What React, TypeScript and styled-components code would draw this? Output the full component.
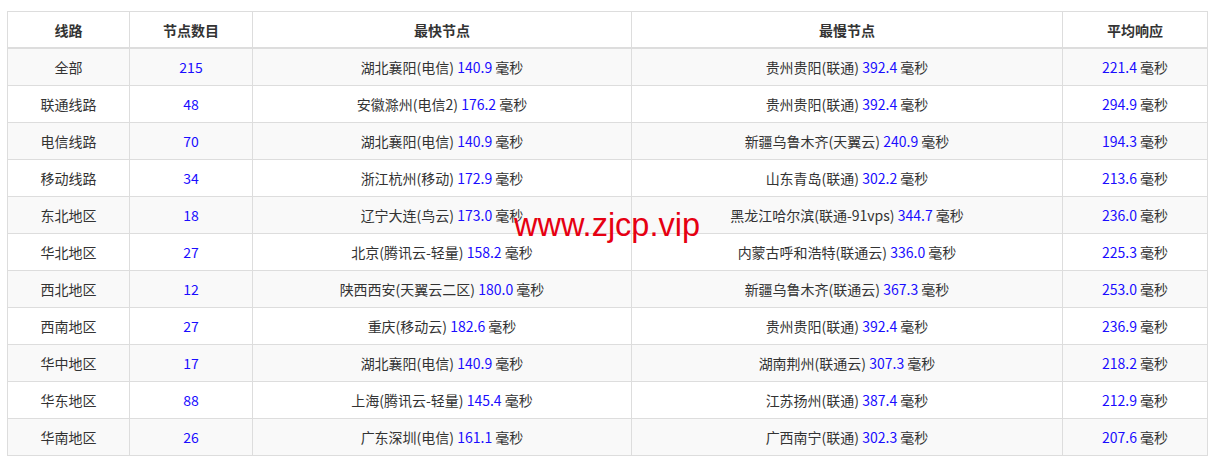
import React from 'react';
import styled, { createGlobalStyle } from 'styled-components';

const GlobalStyle = createGlobalStyle`
  body {
    margin: 0;
    background: #ffffff;
    font-family: "Noto Sans CJK SC", "Noto Sans", sans-serif;
  }
`;

const Page = styled.div`
  position: relative;
  padding: 11px 10px 0 7px;
  width: 1216px;
  height: 467px;
  box-sizing: border-box;
`;

const Table = styled.table`
  width: 1200px;
  border-collapse: collapse;
  table-layout: fixed;
  font-size: 14px;
  color: #333333;
  border: 1px solid #dddddd;
`;

const HeadCell = styled.th`
  height: 35px;
  padding: 0;
  font-weight: bold;
  font-size: 14px;
  text-align: center;
  border: 1px solid #dddddd;
  border-bottom: 2px solid #dddddd;
  background: #ffffff;
`;

const Row = styled.tr<{ $striped: boolean }>`
  background: ${(p) => (p.$striped ? '#f9f9f9' : '#ffffff')};
`;

const Cell = styled.td`
  height: 36px;
  padding: 0;
  text-align: center;
  border: 1px solid #dddddd;
  white-space: nowrap;
`;

const Num = styled.span`
  color: #1a0dff;
`;

const Watermark = styled.div`
  position: absolute;
  left: 514px;
  top: 207px;
  font-family: "Liberation Sans", Arial, sans-serif;
  font-size: 32.5px;
  color: #e60012;
  pointer-events: none;
`;

type Line = {
  name: string;
  count: number;
  fast: [string, string];
  slow: [string, string];
  avg: string;
};

const rows: Line[] = [
  { name: '全部', count: 215, fast: ['湖北襄阳(电信)', '140.9'], slow: ['贵州贵阳(联通)', '392.4'], avg: '221.4' },
  { name: '联通线路', count: 48, fast: ['安徽滁州(电信2)', '176.2'], slow: ['贵州贵阳(联通)', '392.4'], avg: '294.9' },
  { name: '电信线路', count: 70, fast: ['湖北襄阳(电信)', '140.9'], slow: ['新疆乌鲁木齐(天翼云)', '240.9'], avg: '194.3' },
  { name: '移动线路', count: 34, fast: ['浙江杭州(移动)', '172.9'], slow: ['山东青岛(联通)', '302.2'], avg: '213.6' },
  { name: '东北地区', count: 18, fast: ['辽宁大连(鸟云)', '173.0'], slow: ['黑龙江哈尔滨(联通-91vps)', '344.7'], avg: '236.0' },
  { name: '华北地区', count: 27, fast: ['北京(腾讯云-轻量)', '158.2'], slow: ['内蒙古呼和浩特(联通云)', '336.0'], avg: '225.3' },
  { name: '西北地区', count: 12, fast: ['陕西西安(天翼云二区)', '180.0'], slow: ['新疆乌鲁木齐(联通云)', '367.3'], avg: '253.0' },
  { name: '西南地区', count: 27, fast: ['重庆(移动云)', '182.6'], slow: ['贵州贵阳(联通)', '392.4'], avg: '236.9' },
  { name: '华中地区', count: 17, fast: ['湖北襄阳(电信)', '140.9'], slow: ['湖南荆州(联通云)', '307.3'], avg: '218.2' },
  { name: '华东地区', count: 88, fast: ['上海(腾讯云-轻量)', '145.4'], slow: ['江苏扬州(联通)', '387.4'], avg: '212.9' },
  { name: '华南地区', count: 26, fast: ['广东深圳(电信)', '161.1'], slow: ['广西南宁(联通)', '302.3'], avg: '207.6' },
];

const Node: React.FC<{ place: string; ms: string }> = ({ place, ms }) => (
  <>
    {place} <Num>{ms}</Num> 毫秒
  </>
);

const App: React.FC = () => {
  return (
    <Page>
      <GlobalStyle />
      <Table>
        <colgroup>
          <col style={{ width: 122 }} />
          <col style={{ width: 123 }} />
          <col style={{ width: 379 }} />
          <col style={{ width: 431 }} />
          <col style={{ width: 145 }} />
        </colgroup>
        <thead>
          <tr>
            <HeadCell>线路</HeadCell>
            <HeadCell>节点数目</HeadCell>
            <HeadCell>最快节点</HeadCell>
            <HeadCell>最慢节点</HeadCell>
            <HeadCell>平均响应</HeadCell>
          </tr>
        </thead>
        <tbody>
          {rows.map((r, i) => (
            <Row key={r.name} $striped={i % 2 === 0}>
              <Cell>{r.name}</Cell>
              <Cell>
                <Num>{r.count}</Num>
              </Cell>
              <Cell>
                <Node place={r.fast[0]} ms={r.fast[1]} />
              </Cell>
              <Cell>
                <Node place={r.slow[0]} ms={r.slow[1]} />
              </Cell>
              <Cell>
                <Num>{r.avg}</Num> 毫秒
              </Cell>
            </Row>
          ))}
        </tbody>
      </Table>
      <Watermark>www.zjcp.vip</Watermark>
    </Page>
  );
};

export default App;
